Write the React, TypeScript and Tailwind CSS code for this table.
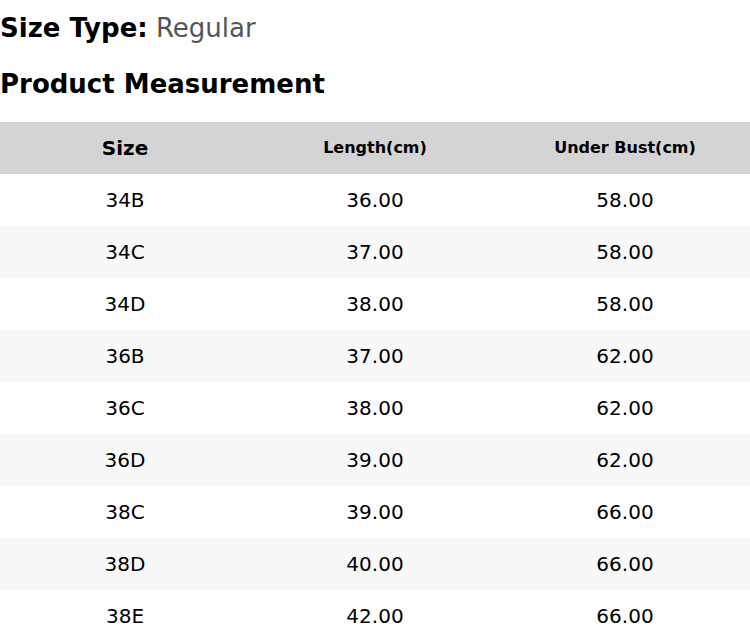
const rows = [
  ['34B', '36.00', '58.00'],
  ['34C', '37.00', '58.00'],
  ['34D', '38.00', '58.00'],
  ['36B', '37.00', '62.00'],
  ['36C', '38.00', '62.00'],
  ['36D', '39.00', '62.00'],
  ['38C', '39.00', '66.00'],
  ['38D', '40.00', '66.00'],
  ['38E', '42.00', '66.00'],
];

export default function App() {
  return (
    <div className="w-[750px] bg-white text-black font-['DejaVu_Sans',sans-serif]">
      <div className="pt-[12px] text-[26px] leading-[32px]">
        <span className="font-bold">Size Type:</span>{' '}
        <span className="text-[#555555]">Regular</span>
      </div>
      <h2 className="mt-[24px] text-[26px] leading-[32px] font-bold">Product Measurement</h2>
      <table className="mt-[22px] w-full table-fixed border-collapse">
        <thead>
          <tr className="h-[52px] bg-[#d4d4d4]">
            <th className="text-[20px] font-bold">Size</th>
            <th className="text-[16px] font-bold">Length(cm)</th>
            <th className="text-[16px] font-bold">Under Bust(cm)</th>
          </tr>
        </thead>
        <tbody>
          {rows.map((r, i) => (
            <tr key={r[0]} className={i % 2 === 0 ? 'h-[52px] bg-white' : 'h-[52px] bg-[#f8f8f8]'}>
              {r.map((c, j) => (
                <td key={j} className="text-center text-[20px]">
                  {c}
                </td>
              ))}
            </tr>
          ))}
        </tbody>
      </table>
    </div>
  );
}
